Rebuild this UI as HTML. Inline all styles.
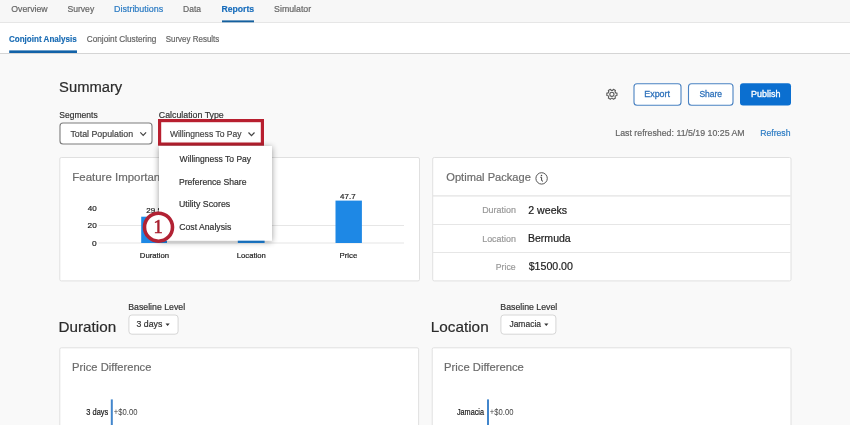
<!DOCTYPE html>
<html><head><meta charset="utf-8"><title>Conjoint Analysis</title>
<style>
*{margin:0;padding:0}
html,body{width:850px;height:425px;overflow:hidden;background:#f9f9f9}
svg{display:block;font-family:"Liberation Sans",sans-serif}
</style></head><body>
<svg width="850" height="425" viewBox="0 0 850 425">
<defs>
<filter id="sh" x="-20%" y="-20%" width="140%" height="140%">
<feGaussianBlur in="SourceAlpha" stdDeviation="3.2"/>
<feOffset dx="0" dy="1.2" result="b"/>
<feComponentTransfer><feFuncA type="linear" slope="0.4"/></feComponentTransfer>
<feMerge><feMergeNode/><feMergeNode in="SourceGraphic"/></feMerge>
</filter>
</defs>
<!-- page -->
<rect x="0" y="0" width="850" height="425" fill="#f9f9f9"/>
<rect x="0" y="0" width="850" height="22" fill="#f7f7f7"/>
<rect x="0" y="22" width="850" height="1" fill="#e6e6e6"/>
<rect x="0" y="23" width="850" height="30" fill="#ffffff"/>
<rect x="0" y="53" width="850" height="1" fill="#d5d5d5"/>
<rect x="222" y="20.4" width="32" height="1.9" fill="#14609f"/>
<rect x="9.2" y="50.4" width="67.8" height="2.6" fill="#1262a8"/>

<!-- segment dropdown -->
<rect x="60" y="123" width="92" height="21" rx="3" fill="#fff" stroke="#7c7c7c" stroke-width="1.1"/>
<polyline points="140.3,132.4 143.2,135.4 146.1,132.4" fill="none" stroke="#444" stroke-width="1.2"/>
<!-- calc type highlighted -->
<rect x="159.6" y="120.6" width="102.8" height="23.5" fill="#fff" stroke="#b81f2f" stroke-width="3.2"/>
<polyline points="248.5,132.5 251.5,135.6 254.5,132.5" fill="none" stroke="#444" stroke-width="1.2"/>

<!-- gear -->
<g transform="translate(611.9,94.3)" fill="none" stroke="#5a5a5a" stroke-width="1.1" stroke-linejoin="round"><path d="M3.73,-1.43 L5.07,-1.17 L5.07,1.17 L3.73,1.43 L3.11,2.52 L3.55,3.80 L1.52,4.97 L0.63,3.95 L-0.63,3.95 L-1.52,4.97 L-3.55,3.80 L-3.11,2.52 L-3.73,1.43 L-5.07,1.17 L-5.07,-1.17 L-3.73,-1.43 L-3.11,-2.52 L-3.55,-3.80 L-1.52,-4.97 L-0.63,-3.95 L0.63,-3.95 L1.52,-4.97 L3.55,-3.80 L3.11,-2.52 Z"/><circle cx="0" cy="0" r="2.1"/></g>
<!-- buttons -->
<rect x="634" y="83.8" width="47" height="21.5" rx="3" fill="#fff" stroke="#4a82c2" stroke-width="1.1"/>
<rect x="688.5" y="83.8" width="44.5" height="21.5" rx="3" fill="#fff" stroke="#4a82c2" stroke-width="1.1"/>
<rect x="740" y="83.3" width="51" height="22.3" rx="3" fill="#0b6fd0"/>

<!-- feature importance card -->
<rect x="59.8" y="157.5" width="359.7" height="123.4" rx="1.5" fill="#fff" stroke="#e0e0e0" stroke-width="1"/>
<rect x="98.5" y="225" width="305.5" height="1" fill="#e6e6e6"/>
<rect x="98.5" y="242.5" width="305.5" height="1" fill="#e6e6e6"/>
<rect x="141.2" y="216.7" width="25.8" height="26.3" fill="#1e88e5"/>
<rect x="237.8" y="223" width="26.8" height="20" fill="#1e88e5"/>
<rect x="335.5" y="200.6" width="26.4" height="42.4" fill="#1e88e5"/>

<!-- optimal package card -->
<rect x="432.7" y="157.5" width="358.3" height="123.4" rx="1.5" fill="#fff" stroke="#e0e0e0" stroke-width="1"/>
<rect x="433" y="195.3" width="357.5" height="1.2" fill="#e2e2e2"/>
<rect x="433" y="224" width="357.5" height="1" fill="#e6e6e6"/>
<rect x="433" y="252" width="357.5" height="1" fill="#e6e6e6"/>
<circle cx="541.6" cy="178.4" r="5.7" fill="none" stroke="#555" stroke-width="1"/>
<circle cx="541.5" cy="175.4" r="0.75" fill="#444"/>
<path d="M540.3,177.3 L541.6,177.3 L541.6,180.4 Q541.7,181.4 543,181" fill="none" stroke="#444" stroke-width="1"/>

<!-- bottom -->
<rect x="128.9" y="315" width="49.2" height="19.2" rx="3" fill="#fff" stroke="#d6d6d6" stroke-width="1"/>
<polygon points="165.5,323.4 169.7,323.4 167.6,325.9" fill="#333"/>
<rect x="500.9" y="315" width="55" height="19.2" rx="3" fill="#fff" stroke="#d6d6d6" stroke-width="1"/>
<polygon points="544.2,323.4 548.4,323.4 546.3,325.9" fill="#333"/>
<rect x="59.8" y="347.8" width="358.8" height="100" rx="1.5" fill="#fff" stroke="#e0e0e0" stroke-width="1"/>
<rect x="432.2" y="347.8" width="358.8" height="100" rx="1.5" fill="#fff" stroke="#e0e0e0" stroke-width="1"/>
<rect x="110.8" y="399.4" width="2" height="30" fill="#4286cc"/>
<rect x="487" y="399.4" width="2" height="30" fill="#4286cc"/>

<g opacity="0.999">
<text x="11.30" y="12.00" font-size="8.8" fill="#666666" stroke="#666666" stroke-width="0.2" textLength="36.35" lengthAdjust="spacingAndGlyphs">Overview</text>
<text x="67.41" y="12.00" font-size="8.8" fill="#666666" stroke="#666666" stroke-width="0.2" textLength="26.79" lengthAdjust="spacingAndGlyphs">Survey</text>
<text x="114.09" y="12.00" font-size="8.8" fill="#2b7bc3" stroke="#2b7bc3" stroke-width="0.2" textLength="49.01" lengthAdjust="spacingAndGlyphs">Distributions</text>
<text x="183.02" y="12.00" font-size="8.8" fill="#666666" stroke="#666666" stroke-width="0.2" textLength="17.97" lengthAdjust="spacingAndGlyphs">Data</text>
<text x="221.41" y="12.00" font-size="8.8" font-weight="bold" fill="#176cbb" stroke="#176cbb" stroke-width="0.15" textLength="32.78" lengthAdjust="spacingAndGlyphs">Reports</text>
<text x="274.10" y="12.00" font-size="8.8" fill="#666666" stroke="#666666" stroke-width="0.2" textLength="37.03" lengthAdjust="spacingAndGlyphs">Simulator</text>
<text x="8.92" y="41.90" font-size="8.6" font-weight="bold" fill="#176ab3" stroke="#176ab3" stroke-width="0.15" textLength="67.84" lengthAdjust="spacingAndGlyphs">Conjoint Analysis</text>
<text x="86.72" y="41.90" font-size="8.6" fill="#666666" stroke="#666666" stroke-width="0.2" textLength="69.65" lengthAdjust="spacingAndGlyphs">Conjoint Clustering</text>
<text x="165.72" y="41.90" font-size="8.6" fill="#666666" stroke="#666666" stroke-width="0.2" textLength="53.56" lengthAdjust="spacingAndGlyphs">Survey Results</text>
<text x="59.11" y="92.40" font-size="15.1" fill="#2b2b2b" stroke="#2b2b2b" stroke-width="0.2" textLength="63.14" lengthAdjust="spacingAndGlyphs">Summary</text>
<text x="59.33" y="117.70" font-size="9.1" fill="#333333" stroke="#333333" stroke-width="0.2" textLength="38.31" lengthAdjust="spacingAndGlyphs">Segments</text>
<text x="158.81" y="117.70" font-size="9.1" fill="#333333" stroke="#333333" stroke-width="0.2" textLength="64.93" lengthAdjust="spacingAndGlyphs">Calculation Type</text>
<text x="70.41" y="136.60" font-size="9.3" fill="#444444" stroke="#444444" stroke-width="0.2" textLength="62.73" lengthAdjust="spacingAndGlyphs">Total Population</text>
<text x="169.90" y="136.70" font-size="9.3" fill="#444444" stroke="#444444" stroke-width="0.2" textLength="71.65" lengthAdjust="spacingAndGlyphs">Willingness To Pay</text>
<text x="644.28" y="97.00" font-size="8.6" fill="#2f72bb" stroke="#2f72bb" stroke-width="0.3" textLength="25.71" lengthAdjust="spacingAndGlyphs">Export</text>
<text x="699.40" y="97.00" font-size="8.6" fill="#2f72bb" stroke="#2f72bb" stroke-width="0.3" textLength="22.68" lengthAdjust="spacingAndGlyphs">Share</text>
<text x="751.07" y="96.70" font-size="8.6" fill="#ffffff" stroke="#ffffff" stroke-width="0.3" textLength="29.43" lengthAdjust="spacingAndGlyphs">Publish</text>
<text x="615.31" y="135.90" font-size="8.9" fill="#666666" stroke="#666666" stroke-width="0.2" textLength="129.39" lengthAdjust="spacingAndGlyphs">Last refreshed: 11/5/19 10:25 AM</text>
<text x="760.22" y="135.90" font-size="8.9" fill="#2b7bc3" stroke="#2b7bc3" stroke-width="0.2" textLength="30.21" lengthAdjust="spacingAndGlyphs">Refresh</text>
<text x="72.36" y="181.10" font-size="11.0" fill="#6b6b6b" stroke="#6b6b6b" stroke-width="0.2" textLength="99.87" lengthAdjust="spacingAndGlyphs">Feature Importance</text>
<text x="446.30" y="181.20" font-size="11.0" fill="#6b6b6b" stroke="#6b6b6b" stroke-width="0.2" textLength="84.53" lengthAdjust="spacingAndGlyphs">Optimal Package</text>
<text x="87.79" y="210.60" font-size="7.6" fill="#222222" stroke="#222222" stroke-width="0.2" textLength="8.95" lengthAdjust="spacingAndGlyphs">40</text>
<text x="87.57" y="227.90" font-size="7.6" fill="#222222" stroke="#222222" stroke-width="0.2" textLength="9.17" lengthAdjust="spacingAndGlyphs">20</text>
<text x="92.08" y="245.50" font-size="7.6" fill="#222222" stroke="#222222" stroke-width="0.2" textLength="4.67" lengthAdjust="spacingAndGlyphs">0</text>
<text x="146.38" y="213.10" font-size="7.6" fill="#222222" stroke="#222222" stroke-width="0.2" textLength="15.55" lengthAdjust="spacingAndGlyphs">29.5</text>
<text x="340.10" y="198.90" font-size="7.6" fill="#222222" stroke="#222222" stroke-width="0.2" textLength="15.45" lengthAdjust="spacingAndGlyphs">47.7</text>
<text x="139.81" y="257.60" font-size="7.9" fill="#222222" stroke="#222222" stroke-width="0.2" textLength="29.27" lengthAdjust="spacingAndGlyphs">Duration</text>
<text x="236.82" y="257.60" font-size="7.9" fill="#222222" stroke="#222222" stroke-width="0.2" textLength="28.96" lengthAdjust="spacingAndGlyphs">Location</text>
<text x="339.40" y="257.60" font-size="7.9" fill="#222222" stroke="#222222" stroke-width="0.2" textLength="17.89" lengthAdjust="spacingAndGlyphs">Price</text>
<text x="482.20" y="213.30" font-size="8.9" fill="#999999" stroke="#999999" stroke-width="0.2" textLength="33.65" lengthAdjust="spacingAndGlyphs">Duration</text>
<text x="482.20" y="241.80" font-size="8.9" fill="#999999" stroke="#999999" stroke-width="0.2" textLength="33.65" lengthAdjust="spacingAndGlyphs">Location</text>
<text x="495.82" y="270.10" font-size="8.9" fill="#999999" stroke="#999999" stroke-width="0.2" textLength="19.83" lengthAdjust="spacingAndGlyphs">Price</text>
<text x="528.29" y="213.60" font-size="10.3" fill="#222222" stroke="#222222" stroke-width="0.2" textLength="38.87" lengthAdjust="spacingAndGlyphs">2 weeks</text>
<text x="527.98" y="241.80" font-size="10.3" fill="#222222" stroke="#222222" stroke-width="0.2" textLength="42.74" lengthAdjust="spacingAndGlyphs">Bermuda</text>
<text x="528.70" y="270.10" font-size="10.3" fill="#222222" stroke="#222222" stroke-width="0.2" textLength="44.24" lengthAdjust="spacingAndGlyphs">$1500.00</text>
<text x="58.58" y="332.00" font-size="15.0" fill="#2b2b2b" stroke="#2b2b2b" stroke-width="0.2" textLength="57.58" lengthAdjust="spacingAndGlyphs">Duration</text>
<text x="430.78" y="331.80" font-size="15.0" fill="#2b2b2b" stroke="#2b2b2b" stroke-width="0.2" textLength="57.89" lengthAdjust="spacingAndGlyphs">Location</text>
<text x="128.19" y="310.20" font-size="8.6" fill="#333333" stroke="#333333" stroke-width="0.2" textLength="56.93" lengthAdjust="spacingAndGlyphs">Baseline Level</text>
<text x="500.39" y="310.20" font-size="8.6" fill="#333333" stroke="#333333" stroke-width="0.2" textLength="56.93" lengthAdjust="spacingAndGlyphs">Baseline Level</text>
<text x="136.51" y="327.40" font-size="9.0" fill="#333333" stroke="#333333" stroke-width="0.2" textLength="25.78" lengthAdjust="spacingAndGlyphs">3 days</text>
<text x="509.41" y="327.40" font-size="9.0" fill="#333333" stroke="#333333" stroke-width="0.2" textLength="31.61" lengthAdjust="spacingAndGlyphs">Jamacia</text>
<text x="72.10" y="371.40" font-size="11.2" fill="#6b6b6b" stroke="#6b6b6b" stroke-width="0.2" textLength="79.33" lengthAdjust="spacingAndGlyphs">Price Difference</text>
<text x="444.10" y="371.40" font-size="11.2" fill="#6b6b6b" stroke="#6b6b6b" stroke-width="0.2" textLength="79.73" lengthAdjust="spacingAndGlyphs">Price Difference</text>
<text x="86.34" y="415.00" font-size="8.6" fill="#1a1a1a" stroke="#1a1a1a" stroke-width="0.2" textLength="21.92" lengthAdjust="spacingAndGlyphs">3 days</text>
<text x="113.84" y="415.00" font-size="8.4" fill="#444444" textLength="23.61" lengthAdjust="spacingAndGlyphs">+$0.00</text>
<text x="456.92" y="415.00" font-size="8.6" fill="#1a1a1a" stroke="#1a1a1a" stroke-width="0.2" textLength="27.07" lengthAdjust="spacingAndGlyphs">Jamacia</text>
<text x="489.84" y="415.00" font-size="8.4" fill="#444444" textLength="23.61" lengthAdjust="spacingAndGlyphs">+$0.00</text>
</g>

<!-- dropdown menu -->
<rect x="159" y="146" width="113" height="94.6" fill="#fff" filter="url(#sh)"/>
<g opacity="0.999">
<text x="179.60" y="162.40" font-size="9.1" fill="#333333" stroke="#333333" stroke-width="0.2" textLength="71.55" lengthAdjust="spacingAndGlyphs">Willingness To Pay</text>
<text x="178.94" y="184.70" font-size="9.1" fill="#333333" stroke="#333333" stroke-width="0.2" textLength="67.61" lengthAdjust="spacingAndGlyphs">Preference Share</text>
<text x="178.92" y="207.10" font-size="9.1" fill="#333333" stroke="#333333" stroke-width="0.2" textLength="51.32" lengthAdjust="spacingAndGlyphs">Utility Scores</text>
<text x="179.22" y="230.00" font-size="9.1" fill="#333333" stroke="#333333" stroke-width="0.2" textLength="52.01" lengthAdjust="spacingAndGlyphs">Cost Analysis</text>
</g>

<!-- annotation -->
<circle cx="158.5" cy="227.2" r="14" fill="#fff" stroke="#b22234" stroke-width="3.6"/>
<g opacity="0.999"><text x="158.2" y="233.1" font-family="Liberation Serif, serif" font-size="18.5" fill="#a8202f" stroke="#a8202f" stroke-width="0.55" text-anchor="middle">1</text></g>
</svg>
</body></html>
